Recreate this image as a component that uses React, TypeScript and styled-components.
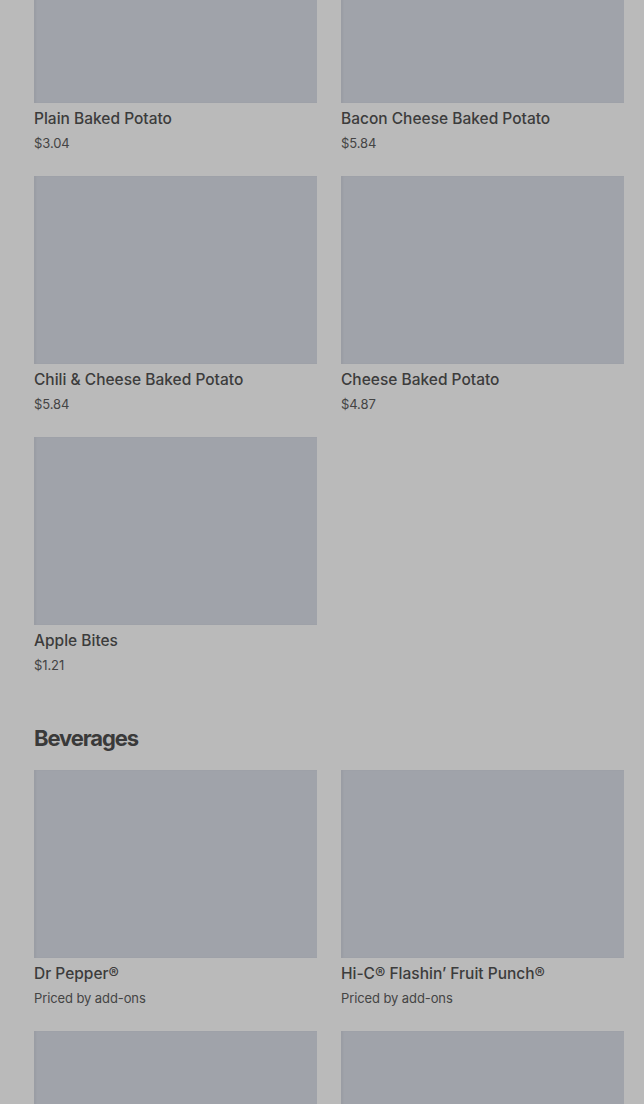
import React from 'react'
import styled, { createGlobalStyle } from 'styled-components'

type Item = { name: string; price: string }

const sides: Item[] = [
  { name: 'Plain Baked Potato', price: '$3.04' },
  { name: 'Bacon Cheese Baked Potato', price: '$5.84' },
  { name: 'Chili & Cheese Baked Potato', price: '$5.84' },
  { name: 'Cheese Baked Potato', price: '$4.87' },
  { name: 'Apple Bites', price: '$1.21' },
]

const beverages: Item[] = [
  { name: 'Dr Pepper®', price: 'Priced by add-ons' },
  { name: 'Hi-C® Flashin’ Fruit Punch®', price: 'Priced by add-ons' },
  { name: 'Coca-Cola®', price: 'Priced by add-ons' },
  { name: 'Sprite®', price: 'Priced by add-ons' },
]

const GlobalStyle = createGlobalStyle`
  html, body {
    margin: 0;
    padding: 0;
    background: #bababa;
    overflow: hidden;
  }
  body {
    font-family: Inter, "Liberation Sans", sans-serif;
    color: #3c3c3c;
  }
`

const Page = styled.div`
  margin-top: -85px;
  padding: 0 20px 40px 34px;
`

const Section = styled.section`
  display: flex;
  flex-direction: column;
`

const Heading = styled.h2`
  margin: 47px 0 18px;
  font-size: 22px;
  line-height: 28px;
  font-weight: 700;
  letter-spacing: -1.1px;
  color: #3a3a3a;
`

const Grid = styled.div`
  display: grid;
  grid-template-columns: 1fr 1fr;
  column-gap: 24px;
  row-gap: 21px;
`

const Card = styled.div`
  display: flex;
  flex-direction: column;
`

const Photo = styled.div`
  height: 188px;
  background: #a0a3aa;
  box-shadow: inset 2px 0 2px rgba(0, 0, 0, 0.04);
`

const Info = styled.div`
  padding-top: 4px;
  display: flex;
  flex-direction: column;
`

const Name = styled.div`
  font-size: 15.5px;
  line-height: 24px;
  font-weight: 500;
  color: #3c3c3c;
`

const Price = styled.div`
  font-size: 13px;
  line-height: 24px;
  color: #444;
  letter-spacing: -0.1px;
`

const ItemCard = ({ item }: { item: Item }) => (
  <Card>
    <Photo />
    <Info>
      <Name>{item.name}</Name>
      <Price>{item.price}</Price>
    </Info>
  </Card>
)

const App = () => {
  return (
    <>
      <GlobalStyle />
      <Page>
        <Section>
          <Grid>
            {sides.map(item => (
              <ItemCard key={item.name} item={item} />
            ))}
          </Grid>
        </Section>
        <Section>
          <Heading>Beverages</Heading>
          <Grid>
            {beverages.map(item => (
              <ItemCard key={item.name} item={item} />
            ))}
          </Grid>
        </Section>
      </Page>
    </>
  )
}

export default App
